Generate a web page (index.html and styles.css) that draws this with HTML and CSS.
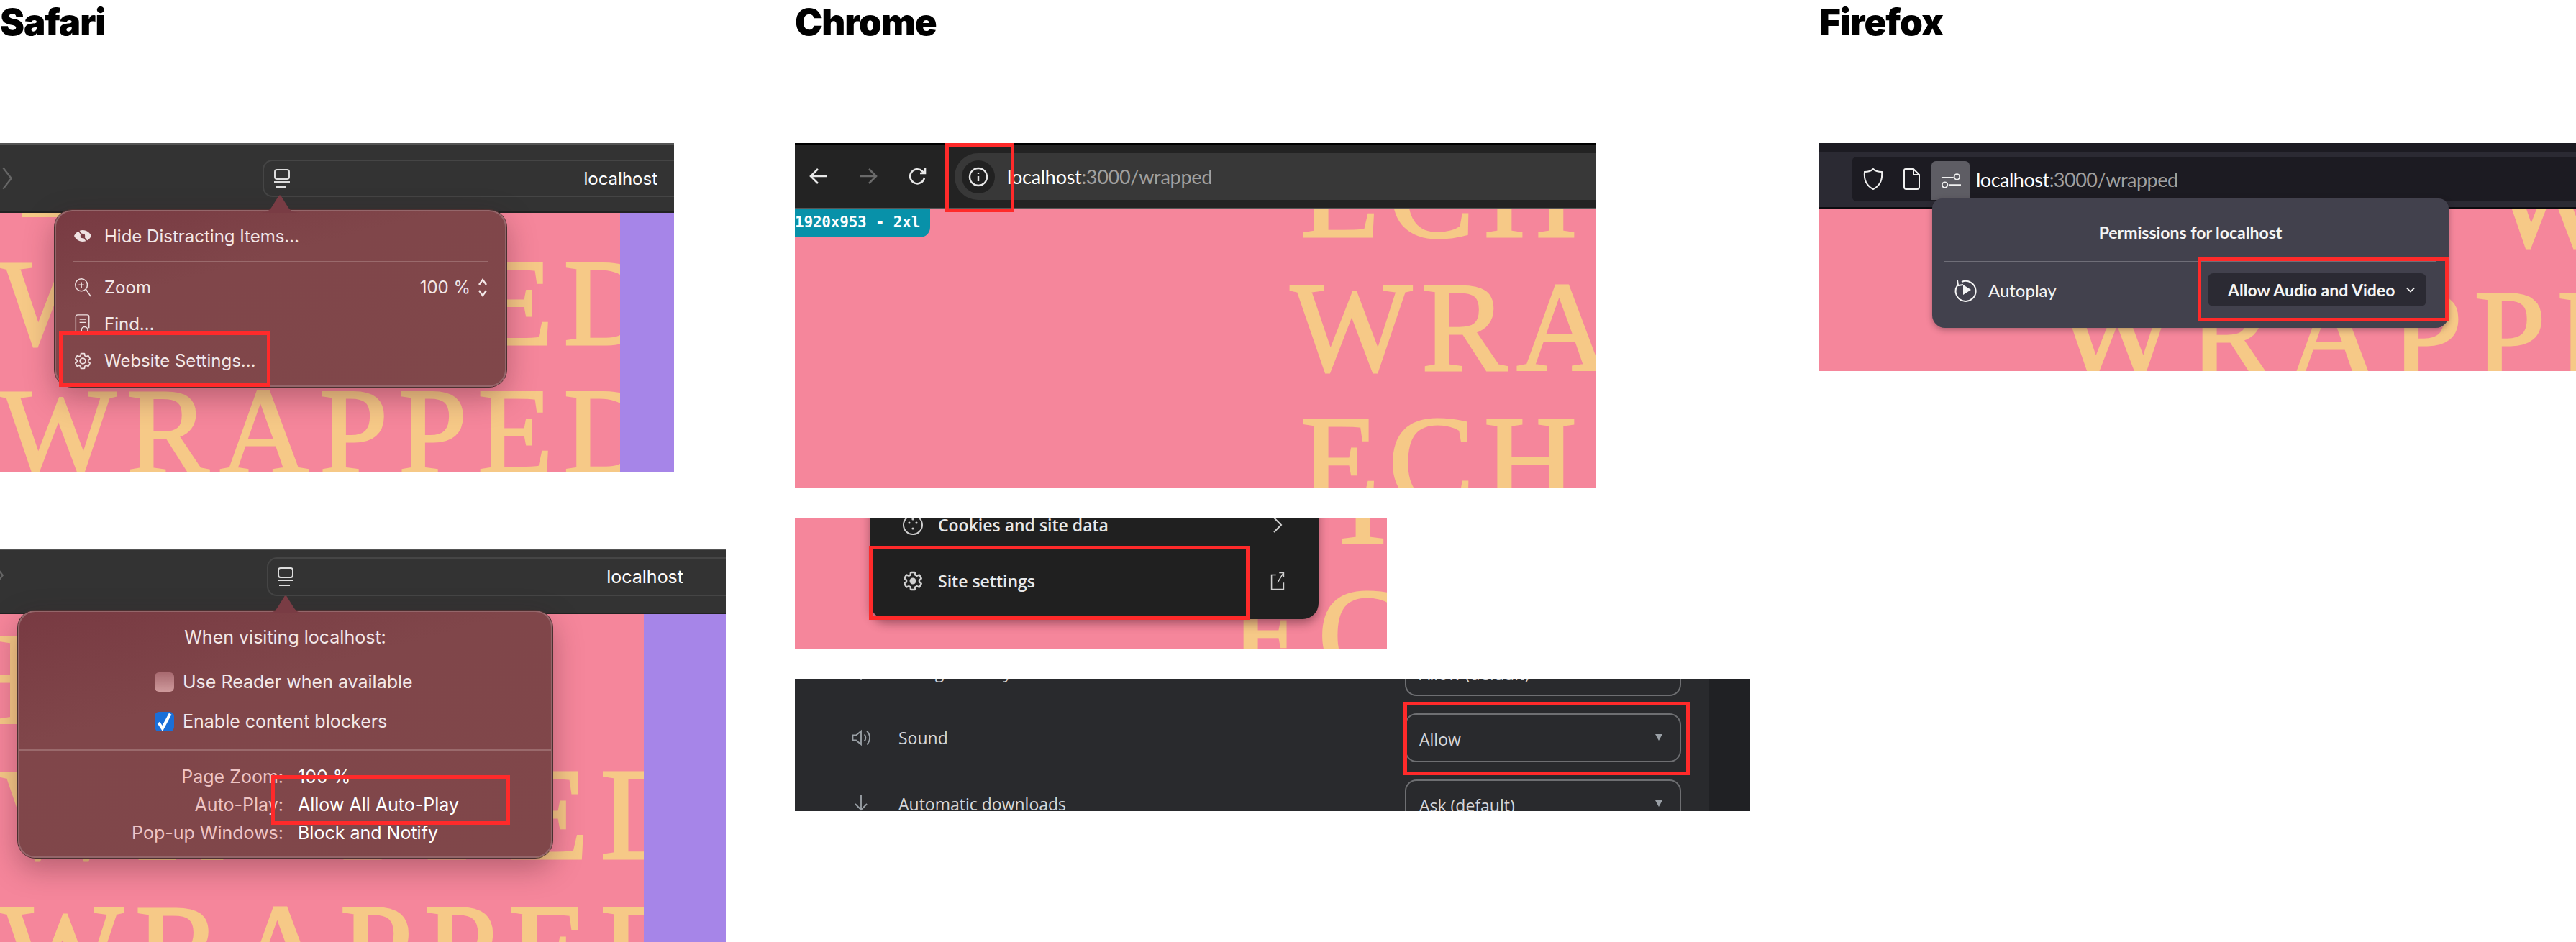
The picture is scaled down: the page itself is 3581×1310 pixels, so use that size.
FILE: index.html
```html
<!DOCTYPE html>
<html>
<head>
    <meta charset="UTF-8">
    <title>Autoplay settings per browser</title>
    <link rel="stylesheet" href="styles.css">
</head>
<body>
<main class="page">

    <!-- Safari -->
    <section class="col">
        <h2 class="col-title">Safari</h2>

        <div class="shot safari-a">
            <div class="safari-bar">
                <svg class="safari-back" viewBox="0 0 12 30"><path d="M1 2l10 13L1 28"/></svg>
                <div class="safari-url">
                    <svg class="reader-icon" viewBox="0 0 22 27"><rect x="1" y="1" width="20" height="13" rx="3"/><path d="M0 18h22M2 25h15"/></svg>
                    <span class="safari-host">localhost</span>
                </div>
            </div>
            <div class="safari-page">
                <div class="stage">
                    <div class="big-a">
                        <div class="big-a-line first">TECH</div>
                        <div class="big-a-line">WRAPPED</div>
                        <div class="big-a-line">WRAPPED</div>
                    </div>
                </div>
                <div class="strip"></div>
            </div>

            <div class="safari-pop pop-a">
                <svg class="pop-tip tip-a" viewBox="0 0 60 26"><path d="M0 26c10 0 14-2 18-7L28 3c1-2 3-2 4 0l10 16c4 5 8 7 18 7z"/></svg>
                <div class="menu-row row-hide">
                    <svg class="menu-icon" viewBox="0 0 26 20"><path class="solid" d="M13 2C7 2 3 6 1 10c2 4 6 8 12 8s10-4 12-8c-2-4-6-8-12-8z"/><circle class="cut" cx="13" cy="10" r="4"/><path class="cut-line" d="M6 1l14 18"/></svg>
                    <span>Hide Distracting Items…</span>
                </div>
                <div class="menu-sep"></div>
                <div class="menu-row">
                    <svg class="menu-icon" viewBox="0 0 26 30"><circle cx="11" cy="11" r="9"/><path d="M18 18l7 10M11 7v8M7 11h8"/></svg>
                    <span>Zoom</span>
                    <span class="menu-value">100 %</span>
                    <svg class="stepper" viewBox="0 0 14 28"><path d="M2 10l5-7 5 7M2 18l5 7 5-7"/></svg>
                </div>
                <div class="menu-row">
                    <svg class="menu-icon" viewBox="0 0 26 32"><path d="M9 30H5a3 3 0 0 1-3-3V4a3 3 0 0 1 3-3h15a3 3 0 0 1 3 3v18M8 8h10M8 13h10"/><circle cx="16" cy="25" r="5"/></svg>
                    <span>Find…</span>
                </div>
                <div class="menu-row">
                    <svg class="menu-icon gear-line" viewBox="0 0 24 24"><path d="M19.14 12.94c.04-.3.06-.61.06-.94 0-.32-.02-.64-.07-.94l2.03-1.58a.49.49 0 0 0 .12-.61l-1.92-3.32a.488.488 0 0 0-.59-.22l-2.39.96c-.5-.38-1.03-.7-1.62-.94l-.36-2.54a.484.484 0 0 0-.48-.41h-3.84c-.24 0-.43.17-.47.41l-.36 2.54c-.59.24-1.13.57-1.62.94l-2.39-.96c-.22-.08-.47 0-.59.22L2.74 8.87c-.12.21-.08.47.12.61l2.03 1.58c-.05.3-.09.63-.09.94s.02.64.07.94l-2.03 1.58a.49.49 0 0 0-.12.61l1.92 3.32c.12.22.37.29.59.22l2.39-.96c.5.38 1.03.7 1.62.94l.36 2.54c.05.24.24.41.48.41h3.84c.24 0 .44-.17.47-.41l.36-2.54c.59-.24 1.13-.56 1.62-.94l2.39.96c.22.08.47 0 .59-.22l1.92-3.32c.12-.22.07-.47-.12-.61l-2.01-1.58zM12 15.6c-1.98 0-3.6-1.62-3.6-3.6s1.62-3.6 3.6-3.6 3.6 1.62 3.6 3.6-1.62 3.6-3.6 3.6z"/></svg>
                    <span>Website Settings…</span>
                </div>
            </div>
            <div class="mark mark-safari-a"></div>
        </div>

        <div class="shot safari-b">
            <div class="safari-bar">
                <svg class="safari-back" viewBox="0 0 12 30"><path d="M1 2l10 13L1 28"/></svg>
                <div class="safari-url">
                    <svg class="reader-icon" viewBox="0 0 22 27"><rect x="1" y="1" width="20" height="13" rx="3"/><path d="M0 18h22M2 25h15"/></svg>
                    <span class="safari-host">localhost</span>
                </div>
            </div>
            <div class="safari-page">
                <div class="stage">
                    <div class="big-b">
                        <div class="big-b-line first">TECH</div>
                        <div class="big-b-line">WRAPPED</div>
                        <div class="big-b-line">WRAPPED</div>
                    </div>
                </div>
                <div class="strip"></div>
            </div>

            <div class="safari-pop pop-b">
                <svg class="pop-tip tip-b" viewBox="0 0 60 26"><path d="M0 26c10 0 14-2 18-7L28 3c1-2 3-2 4 0l10 16c4 5 8 7 18 7z"/></svg>
                <div class="visit-title">When visiting localhost:</div>
                <div class="check-list">
                    <div class="check-row"><span class="check"></span>Use Reader when available</div>
                    <div class="check-row"><span class="check on"><svg viewBox="0 0 20 20"><path d="M4 11l4 6 8-15"/></svg></span>Enable content blockers</div>
                </div>
                <div class="visit-sep"></div>
                <div class="visit-grid">
                    <span class="visit-label">Page Zoom:</span><span>100 %</span>
                    <span class="visit-label">Auto-Play:</span><span>Allow All Auto-Play</span>
                    <span class="visit-label">Pop-up Windows:</span><span>Block and Notify</span>
                </div>
            </div>
            <div class="mark mark-safari-b"></div>
        </div>
    </section>

    <!-- Chrome -->
    <section class="col">
        <h2 class="col-title">Chrome</h2>

        <div class="shot chrome-a">
            <div class="chrome-bar">
                <svg class="nav-icon" viewBox="0 0 26 26"><path d="M24 13H3M12 3L2 13l10 10"/></svg>
                <svg class="nav-icon dim" viewBox="0 0 26 26"><path d="M2 13h21M14 3l10 10-10 10"/></svg>
                <svg class="nav-icon" viewBox="0 0 26 26"><path d="M22 15a10 10 0 1 1-3-9l3 3M23 2v7h-7"/></svg>
                <div class="chrome-url">
                    <span class="info-dot">
                        <svg viewBox="0 0 28 28"><circle cx="14" cy="14" r="12"/><path d="M14 13v7M14 8v2"/></svg>
                    </span>
                    <span class="chrome-host">localhost<span class="dim-text">:3000/wrapped</span></span>
                </div>
            </div>
            <div class="chrome-page">
                <div class="big-c">
                    <div class="big-c-line echo">ECH</div>
                    <div class="big-c-line">WRAPPED</div>
                    <div class="big-c-line echo">ECH</div>
                </div>
                <div class="size-badge">1920x953 - 2xl</div>
            </div>
            <div class="mark mark-chrome-a"></div>
        </div>

        <div class="shot chrome-b">
            <div class="big-c big-d">
                <div class="big-c-line top">T</div>
                <div class="big-c-line low">ECH</div>
            </div>
            <div class="site-menu">
                <div class="site-row">
                    <svg class="site-icon" viewBox="0 0 30 30"><circle cx="15" cy="15" r="13"/><circle class="pip" cx="10" cy="12" r="1.6"/><circle class="pip" cx="20" cy="12" r="1.6"/><circle class="pip" cx="15" cy="7" r="1.6"/><circle class="pip" cx="15" cy="20" r="1.6"/></svg>
                    <span>Cookies and site data</span>
                    <svg class="site-end" viewBox="0 0 16 26"><path d="M3 3l10 10L3 23"/></svg>
                </div>
                <div class="site-row">
                    <svg class="site-icon" viewBox="0 0 24 24"><path d="M19.14 12.94c.04-.3.06-.61.06-.94 0-.32-.02-.64-.07-.94l2.03-1.58a.49.49 0 0 0 .12-.61l-1.92-3.32a.488.488 0 0 0-.59-.22l-2.39.96c-.5-.38-1.03-.7-1.62-.94l-.36-2.54a.484.484 0 0 0-.48-.41h-3.84c-.24 0-.43.17-.47.41l-.36 2.54c-.59.24-1.13.57-1.62.94l-2.39-.96c-.22-.08-.47 0-.59.22L2.74 8.87c-.12.21-.08.47.12.61l2.03 1.58c-.05.3-.09.63-.09.94s.02.64.07.94l-2.03 1.58a.49.49 0 0 0-.12.61l1.92 3.32c.12.22.37.29.59.22l2.39-.96c.5.38 1.03.7 1.62.94l.36 2.54c.05.24.24.41.48.41h3.84c.24 0 .44-.17.47-.41l.36-2.54c.59-.24 1.13-.56 1.62-.94l2.39.96c.22.08.47 0 .59-.22l1.92-3.32c.12-.22.07-.47-.12-.61l-2.01-1.58z"/><circle class="pip" cx="12" cy="12" r="3.6"/></svg>
                    <span>Site settings</span>
                    <svg class="site-end" viewBox="0 0 26 34"><path d="M10 6H2v26h22V20M13 20L23 3M16 2h8v8"/></svg>
                </div>
            </div>
            <div class="mark mark-chrome-b"></div>
        </div>

        <div class="shot chrome-c">
            <div class="perm-list">
                <div class="perm-row">
                    <svg class="perm-icon" viewBox="0 0 26 26"><path d="M13 3v20"/></svg>
                    <span>Background sync</span>
                    <div class="perm-select">Allow (default)<i class="caret"></i></div>
                </div>
                <div class="perm-row">
                    <svg class="perm-icon" viewBox="0 0 26 26"><path d="M3 10v6h4l6 5V5l-6 5zM17 9a6 6 0 0 1 0 8M20 5a11 11 0 0 1 0 16"/></svg>
                    <span>Sound</span>
                    <div class="perm-select">Allow<i class="caret"></i></div>
                </div>
                <div class="perm-row">
                    <svg class="perm-icon" viewBox="0 0 26 26"><path d="M13 2v18M6 13l7 7 7-7M5 25h16"/></svg>
                    <span>Automatic downloads</span>
                    <div class="perm-select">Ask (default)<i class="caret"></i></div>
                </div>
            </div>
            <div class="perm-side"></div>
            <div class="mark mark-chrome-c"></div>
        </div>
    </section>

    <!-- Firefox -->
    <section class="col">
        <h2 class="col-title">Firefox</h2>

        <div class="shot firefox-a">
            <div class="fx-bar">
                <div class="fx-url">
                    <svg class="fx-icon shield" viewBox="0 0 28 32"><path d="M14 2c3 3 7 4 12 4 1 10-2 19-12 24C4 25 1 16 2 6c5 0 9-1 12-4z"/></svg>
                    <svg class="fx-icon sheet" viewBox="0 0 24 32"><path d="M3 2h11l8 8v17a3 3 0 0 1-3 3H4a3 3 0 0 1-3-3V4a2 2 0 0 1 2-2zM14 2v8h8"/></svg>
                    <span class="fx-perm">
                        <svg viewBox="0 0 30 26"><path d="M1 8h18M12 19h18"/><circle cx="24" cy="7" r="4"/><circle cx="6" cy="19" r="4"/></svg>
                    </span>
                    <span class="fx-host">localhost<span class="dim-text">:3000/wrapped</span></span>
                </div>
            </div>
            <div class="fx-page">
                <div class="big-f">
                    <div class="big-f-line upper">WRAPPED</div>
                    <div class="big-f-line lower">WRAPPED</div>
                </div>
            </div>

            <div class="fx-pop">
                <div class="fx-title">Permissions for localhost</div>
                <div class="fx-sep"></div>
                <div class="fx-row">
                    <svg class="fx-play" viewBox="0 0 32 34"><path d="M10 6a14 14 0 1 1-6 5M4 4l1 7 7-1"/><path class="solid" d="M12 10l11 7-11 7z"/></svg>
                    <span>Autoplay</span>
                    <div class="fx-select">Allow Audio and Video
                        <svg viewBox="0 0 16 10"><path d="M2 2l6 6 6-6"/></svg>
                    </div>
                </div>
            </div>
            <div class="mark mark-firefox"></div>
        </div>
    </section>

</main>
</body>
</html>
```

FILE: styles.css
```css
html, body {
    margin: 0;
    padding: 0;
    background: white;
}

.page {
    display: grid;
    grid-template-columns: 1105px 1424px 1052px;
    width: 3581px;
    height: 1310px;
    overflow: hidden;
}

.col-title {
    margin: 0;
    height: 199px;
    box-sizing: border-box;
    padding-top: 2px;
    font-family: Inter, sans-serif;
    font-weight: 900;
    font-size: 51px;
    line-height: 58px;
    letter-spacing: -1px;
    color: black;
}

.shot {
    position: relative;
    overflow: hidden;
}

svg {
    display: block;
    fill: none;
    stroke: currentColor;
}

.mark {
    position: absolute;
    box-sizing: border-box;
    border: 5px solid #ff2a2a;
    z-index: 5;
}

/* big page text, one block per shot because each was taken at another size */
.big-a, .big-b, .big-c, .big-f {
    font-family: "Liberation Serif", serif;
    color: #f6c987;
    white-space: nowrap;
    -webkit-text-stroke: 3px #f6c987;
}

.big-a {
    margin-top: -143px;
    font-size: 171px;
    line-height: 179px;
    letter-spacing: 15px;
}

.big-a-line.first {
    margin-left: 6px;
}

.big-b {
    margin-top: -5px;
    font-size: 182px;
    line-height: 189px;
    letter-spacing: 16px;
}

.big-b-line.first {
    margin-left: -470px;
}

.big-c {
    margin-top: -114px;
    font-size: 179px;
    line-height: 186px;
    letter-spacing: 13px;
    padding-left: 689px;
}

.big-c-line.echo {
    margin-left: 14px;
}

.big-f {
    margin-top: -100px;
    font-size: 179px;
    line-height: 184px;
    letter-spacing: 16px;
}

.big-f-line.upper {
    margin-left: 934px;
}

.big-f-line.lower {
    margin-left: 329px;
}

/* safari */
.safari-a {
    width: 937px;
    height: 458px;
    margin-bottom: 106px;
}

.safari-b {
    width: 1009px;
    height: 547px;
}

.safari-bar {
    display: flex;
    box-sizing: border-box;
    background: #333333;
    border-top: 2px solid #555555;
    border-bottom: 2px solid #222222;
    color: #dddddd;
}

.safari-a .safari-bar {
    height: 97px;
    padding: 21px 0 0 3px;
}

.safari-b .safari-bar {
    height: 91px;
    padding: 10px 0 0 0;
}

.safari-back {
    flex: none;
    width: 14px;
    height: 34px;
    margin-top: 9px;
    color: #666666;
    stroke-width: 2;
}

.safari-b .safari-back {
    margin-left: -9px;
    margin-top: 8px;
}

.safari-url {
    flex: 1;
    display: flex;
    align-items: center;
    box-sizing: border-box;
    height: 52px;
    border: 2px solid #454545;
    border-right: 0;
    border-radius: 14px 0 0 14px;
}

.safari-a .safari-url {
    margin-left: 348px;
    padding: 0 23px 0 14px;
}

.safari-b .safari-url {
    margin-left: 366px;
    height: 54px;
    padding: 0 59px 0 13px;
}

.reader-icon {
    width: 22px;
    height: 27px;
    stroke-width: 2;
}

.safari-host {
    margin-left: auto;
    font-family: Inter, sans-serif;
    font-size: 24px;
    color: white;
}

.safari-b .safari-host {
    font-size: 25px;
}

.safari-page {
    display: flex;
    overflow: hidden;
    height: 600px;
}

.stage {
    background: #f5869b;
    overflow: hidden;
}

.safari-a .stage {
    width: 862px;
}

.safari-b .stage {
    width: 895px;
}

.strip {
    flex: 1;
    background: #a685e8;
}

.safari-pop {
    position: absolute;
    box-sizing: border-box;
    border: 2px solid #94666a;
    outline: 1px solid #4a3030;
    border-radius: 24px;
    background: linear-gradient(165deg, #783a42 0%, #80464a 35%, #80474a 100%);
    box-shadow: 0 14px 40px rgba(60, 20, 30, 0.35);
    font-family: Inter, sans-serif;
    color: #f3e8e8;
}

.pop-a {
    left: 76px;
    top: 93px;
    width: 628px;
    height: 246px;
    padding: 8px 24px 0;
    font-size: 24px;
}

.pop-b {
    left: 25px;
    top: 86px;
    width: 743px;
    height: 344px;
    font-size: 25px;
}

.pop-tip {
    position: absolute;
    top: -24px;
    width: 60px;
    height: 26px;
    fill: #793c44;
    stroke: none;
}

.tip-a {
    left: 281px;
}

.tip-b {
    left: 340px;
}

.menu-row {
    display: flex;
    align-items: center;
    height: 51px;
}

.row-hide {
    height: 52px;
}

.menu-icon {
    flex: none;
    width: 26px;
    height: 28px;
    margin-right: 17px;
    stroke-width: 1.6;
    color: #efe2e2;
}

.menu-icon .solid {
    fill: #efe2e2;
    stroke: none;
}

.menu-icon .cut {
    fill: #7a3d44;
    stroke: #efe2e2;
}

.menu-icon .cut-line {
    stroke: #7a3d44;
    stroke-width: 2;
}

.menu-sep {
    height: 2px;
    margin: 9px 0 9px;
    background: #9a6a6c;
}

.menu-value {
    margin-left: auto;
}

.stepper {
    width: 14px;
    height: 28px;
    margin-left: 10px;
    stroke-width: 2.4;
}

.visit-title {
    height: 34px;
    margin-top: 18px;
    text-align: center;
    line-height: 34px;
}

.check-list {
    display: flex;
    flex-direction: column;
    gap: 15px;
    margin: 25px 0 19px 188px;
}

.check-row {
    display: flex;
    align-items: center;
    gap: 12px;
    height: 40px;
}

.check {
    display: block;
    box-sizing: border-box;
    width: 27px;
    height: 27px;
    border-radius: 6px;
    background: linear-gradient(#a86a70, #cf9a9c);
}

.check.on {
    background: #1a6fd8;
    color: white;
}

.check.on svg {
    width: 27px;
    height: 27px;
    stroke-width: 3;
}

.visit-sep {
    height: 2px;
    background: #9a6a6c;
}

.visit-grid {
    display: grid;
    grid-template-columns: 367px 1fr;
    grid-auto-rows: 39px;
    column-gap: 20px;
    align-items: center;
    margin-top: 16px;
    color: white;
}

.visit-label {
    text-align: right;
    color: #eec4c4;
}

.mark-safari-a {
    left: 82px;
    top: 262px;
    width: 294px;
    height: 77px;
}

.mark-safari-b {
    left: 377px;
    top: 315px;
    width: 332px;
    height: 69px;
}

/* chrome */
.chrome-a {
    width: 1114px;
    height: 479px;
    margin-bottom: 43px;
}

.chrome-bar {
    display: flex;
    align-items: flex-start;
    box-sizing: border-box;
    height: 91px;
    padding: 12px 0 0 20px;
    background: #232323;
    border-top: 2px solid #000000;
    border-bottom: 1px solid #555555;
    color: #e8e8e8;
}

.nav-icon {
    flex: none;
    width: 26px;
    height: 26px;
    margin: 19px 43px 0 0;
    stroke-width: 2.6;
}

.nav-icon.dim {
    color: #6a6a6a;
}

.chrome-url {
    flex: 1;
    display: flex;
    align-items: center;
    height: 65px;
    margin-left: -5px;
    padding-left: 10px;
    border-radius: 33px 0 0 33px;
    background: #383838;
}

.info-dot {
    display: flex;
    align-items: center;
    justify-content: center;
    flex: none;
    width: 46px;
    height: 46px;
    border-radius: 50%;
    background: #212121;
}

.info-dot svg {
    width: 28px;
    height: 28px;
    stroke-width: 2.4;
}

.chrome-host {
    margin-left: 17px;
    font-family: Lato, sans-serif;
    font-size: 27px;
    letter-spacing: -0.3px;
    color: white;
}

.dim-text {
    color: #a0a0a0;
}

.chrome-page {
    position: relative;
    height: 388px;
    overflow: hidden;
    background: #f5869b;
}

.size-badge {
    position: absolute;
    left: 0;
    top: 0;
    box-sizing: border-box;
    width: 188px;
    height: 40px;
    padding-top: 3px;
    border-radius: 0 0 14px 0;
    background: #0891a9;
    color: white;
    font-family: "DejaVu Sans Mono", monospace;
    font-size: 21px;
    font-weight: bold;
    line-height: 32px;
    letter-spacing: -0.2px;
    white-space: nowrap;
}

.mark-chrome-a {
    left: 209px;
    top: 0;
    width: 96px;
    height: 96px;
}

.chrome-b {
    width: 823px;
    height: 181px;
    margin-bottom: 42px;
    background: #f5869b;
}

.big-d {
    margin-top: -119px;
    padding-left: 0;
}

.big-c-line.top {
    margin-left: 735px;
}

.big-c-line.low {
    margin-left: 605px;
}

.site-menu {
    position: absolute;
    left: 105px;
    top: -30px;
    box-sizing: border-box;
    width: 623px;
    height: 170px;
    padding: 0 44px 0 44px;
    border-radius: 0 0 22px 22px;
    background: #202020;
    box-shadow: 0 6px 14px rgba(60, 20, 30, 0.45);
    color: #e8e8e8;
    font-family: "Open Sans", sans-serif;
    font-weight: 600;
    font-size: 23px;
}

.site-row {
    display: flex;
    align-items: center;
    height: 77px;
}

.site-row:first-child {
    height: 78px;
}

.site-icon {
    flex: none;
    width: 30px;
    height: 30px;
    margin-right: 20px;
    stroke-width: 2;
    color: #cfcfcf;
}

.site-icon .pip {
    fill: #cfcfcf;
    stroke: none;
}

.site-end {
    flex: none;
    width: 26px;
    height: 26px;
    margin-left: auto;
    stroke-width: 2;
    color: #d0d0d0;
}

.mark-chrome-b {
    left: 103px;
    top: 38px;
    width: 529px;
    height: 103px;
}

.chrome-c {
    display: flex;
    width: 1328px;
    height: 184px;
    background: #292a2d;
}

.perm-list {
    width: 1271px;
    margin-top: -56px;
    font-family: "Open Sans", sans-serif;
    font-size: 23px;
    color: #d6d7da;
}

.perm-side {
    flex: 1;
    background: #202124;
}

.perm-row {
    display: flex;
    align-items: center;
    box-sizing: border-box;
    height: 92px;
    padding: 0 39px 0 77px;
}

.perm-icon {
    flex: none;
    width: 30px;
    height: 30px;
    margin-right: 37px;
    stroke-width: 1.6;
    color: #9aa0a6;
}

.perm-select {
    display: flex;
    align-items: center;
    box-sizing: border-box;
    width: 384px;
    height: 68px;
    margin-left: auto;
    padding: 4px 24px 0 18px;
    border: 2px solid #6e6f72;
    border-radius: 16px;
}

.caret {
    margin-left: auto;
    margin-top: -6px;
    border-left: 5px solid transparent;
    border-right: 5px solid transparent;
    border-top: 9px solid #9aa0a6;
}

.mark-chrome-c {
    left: 846px;
    top: 32px;
    width: 398px;
    height: 102px;
}

/* firefox */
.firefox-a {
    width: 1052px;
    height: 317px;
}

.fx-bar {
    box-sizing: border-box;
    height: 91px;
    padding: 19px 0 0 45px;
    background: linear-gradient(#1c1b22 0, #1c1b22 12px, #2b2a33 12px);
    border-bottom: 2px solid #0c0c10;
}

.fx-url {
    display: flex;
    align-items: center;
    height: 62px;
    padding-left: 16px;
    border-radius: 8px 0 0 8px;
    background: #1c1b22;
    color: #f0f0f0;
}

.fx-icon {
    flex: none;
    stroke-width: 2;
}

.shield {
    width: 28px;
    height: 32px;
    margin-right: 28px;
}

.sheet {
    width: 24px;
    height: 32px;
    margin-right: 15px;
}

.fx-perm {
    display: flex;
    align-items: center;
    justify-content: center;
    flex: none;
    width: 53px;
    height: 54px;
    margin-top: 4px;
    border-radius: 6px 6px 0 0;
    background: #5e5d64;
}

.fx-perm svg {
    width: 28px;
    height: 25px;
    stroke-width: 2;
}

.fx-host {
    margin-left: 9px;
    font-family: Lato, sans-serif;
    font-size: 27px;
    letter-spacing: -0.5px;
    color: white;
}

.fx-page {
    height: 226px;
    overflow: hidden;
    background: #f5869b;
}

.fx-pop {
    position: absolute;
    left: 157px;
    top: 77px;
    box-sizing: border-box;
    width: 718px;
    height: 180px;
    padding: 0 17px;
    border-radius: 14px 14px 18px 18px;
    background: #42414d;
    box-shadow: 0 3px 8px rgba(40, 20, 30, 0.35);
    color: #f5f5f5;
    font-family: Lato, sans-serif;
    font-size: 24px;
}

.fx-title {
    height: 87px;
    text-align: center;
    line-height: 94px;
    font-weight: 700;
    font-size: 23px;
}

.fx-sep {
    height: 2px;
    background: #6f6e78;
}

.fx-row {
    display: flex;
    align-items: center;
    height: 76px;
    padding-left: 14px;
}

.fx-play {
    flex: none;
    width: 32px;
    height: 34px;
    margin-right: 15px;
    stroke-width: 2;
}

.fx-play .solid {
    fill: #f5f5f5;
    stroke: none;
}

.fx-select {
    display: flex;
    align-items: center;
    box-sizing: border-box;
    width: 304px;
    height: 46px;
    margin-left: auto;
    margin-right: 14px;
    padding: 0 15px 0 28px;
    border-radius: 8px;
    background: #2b2a33;
    font-weight: 700;
    font-size: 23px;
    white-space: nowrap;
}

.fx-select svg {
    width: 14px;
    height: 10px;
    margin-left: auto;
    stroke-width: 2;
}

.mark-firefox {
    left: 526px;
    top: 159px;
    width: 349px;
    height: 89px;
}
```
